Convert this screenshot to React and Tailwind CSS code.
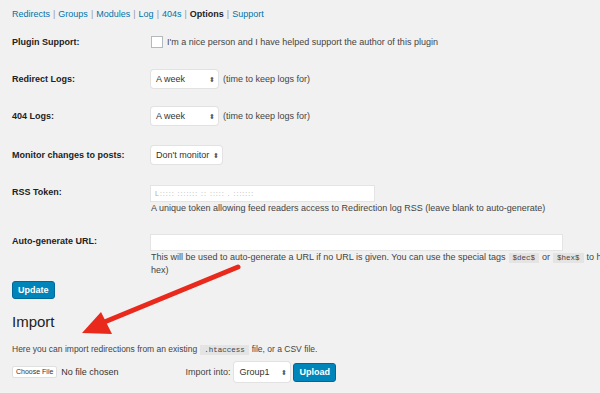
import React from "react";

const navItems = ["Redirects", "Groups", "Modules", "Log", "404s", "Options", "Support"];

const Select = ({ value, width }) => (
  <div
    className={`flex items-center justify-between bg-white rounded-[3px] shadow-[0_0_0_1px_#e2e2e2] pl-[5px] pr-[3px] h-[18px] text-[9px] text-[#333] ${width}`}
  >
    <span>{value}</span>
    <span className="text-[7px] leading-none text-[#555]">⬍</span>
  </div>
);

const Row = ({ label, className, children }) => (
  <div className={`flex ${className}`}>
    <div className="w-[139px] shrink-0 font-bold text-[9px] leading-[12px] text-[#222]">{label}</div>
    <div className="flex-1">{children}</div>
  </div>
);

const Code = ({ children }) => (
  <span className="bg-[#e4e4e4] px-[4px] py-[1px] mx-[3px] font-['Liberation_Mono',monospace] text-[7.5px]">
    {children}
  </span>
);

export default function App() {
  return (
    <div className="relative w-[600px] h-[393px] overflow-hidden bg-[#f1f1f1] font-['Liberation_Sans',Arial,sans-serif] text-[#444] leading-[12px]">
      {/* sub nav */}
      <div className="pl-[12px] pt-[8px] text-[9px] text-[#0073aa]">
        {navItems.map((n, i) => (
          <span key={n}>
            {i > 0 && <span className="text-[#999] mx-[3px]">|</span>}
            <span className={n === "Options" ? "text-[#222] font-bold" : ""}>{n}</span>
          </span>
        ))}
      </div>

      <div className="pl-[12px]">
        <Row label="Plugin Support:" className="mt-[16px] items-center">
          <div className="flex items-center text-[9px]">
            <span className="w-[12px] h-[12px] bg-white border border-[#b4b9be] mr-[4px]" />
            I'm a nice person and I have helped support the author of this plugin
          </div>
        </Row>

        <Row label="Redirect Logs:" className="mt-[22px] items-center">
          <div className="flex items-center gap-[5px] text-[9px]">
            <Select value="A week" width="w-[67px]" />
            (time to keep logs for)
          </div>
        </Row>

        <Row label="404 Logs:" className="mt-[19px] items-center">
          <div className="flex items-center gap-[5px] text-[9px]">
            <Select value="A week" width="w-[67px]" />
            (time to keep logs for)
          </div>
        </Row>

        <Row label="Monitor changes to posts:" className="mt-[21px] items-center">
          <Select value="Don't monitor" width="w-[71px]" />
        </Row>

        <Row label="RSS Token:" className="mt-[22px]">
          <div className="w-[223px] h-[15px] bg-white shadow-[0_0_0_1px_#e4e4e4] px-[4px] flex items-center text-[7px] text-[#aaa] tracking-[1px] overflow-hidden whitespace-nowrap">
            L:::::  :::::::  ::  :::::  .  :::::::
          </div>
          <div className="text-[9px] mt-[1px]">
            A unique token allowing feed readers access to Redirection log RSS (leave blank to auto-generate)
          </div>
        </Row>

        <Row label="Auto-generate URL:" className="mt-[21px]">
          <div className="w-[411px] h-[15px] bg-white shadow-[0_0_0_1px_#e4e4e4]" />
          <div className="text-[9px] mt-[1px]">
            <div className="whitespace-nowrap">
              This will be used to auto-generate a URL if no URL is given. You can use the special tags
              <Code>$dec$</Code>or<Code>$hex$</Code>to have a unique ID inserted (either decimal or
            </div>
            <div>hex)</div>
          </div>
        </Row>

        <button className="mt-[5px] h-[18px] px-[5px] rounded-[3px] bg-[#0085ba] border border-[#006799] text-white font-bold text-[9px] leading-none">
          Update
        </button>

        <h2 className="mt-[14px] text-[15px] leading-[18px] text-[#222]">Import</h2>

        <p className="mt-[12px] text-[8.5px]">
          Here you can import redirections from an existing<Code>.htaccess</Code>file, or a CSV file.
        </p>

        <div className="flex items-center mt-[6px] text-[9px]">
          <span className="bg-white border border-[#e0e0e0] rounded-[2px] px-[3px] h-[12px] flex items-center text-[7px] text-[#333]">
            Choose File
          </span>
          <span className="ml-[4px] text-[#333]">No file chosen</span>
          <span className="ml-[67px] mr-[4px]">Import into:</span>
          <Select value="Group1" width="w-[56px] h-[20px]" />
          <button className="ml-[3px] h-[19px] px-[5px] rounded-[3px] bg-[#0085ba] border border-[#006799] text-white font-bold text-[9px] leading-none">
            Upload
          </button>
        </div>
      </div>

      {/* red arrow annotation */}
      <svg className="absolute left-0 top-0" width="600" height="393" viewBox="0 0 600 393">
        <line x1="238" y1="267" x2="102" y2="323" stroke="#e8291c" strokeWidth="5" strokeLinecap="round" />
        <polygon points="82,333 101,312 112,334" fill="#e8291c" />
      </svg>
    </div>
  );
}
